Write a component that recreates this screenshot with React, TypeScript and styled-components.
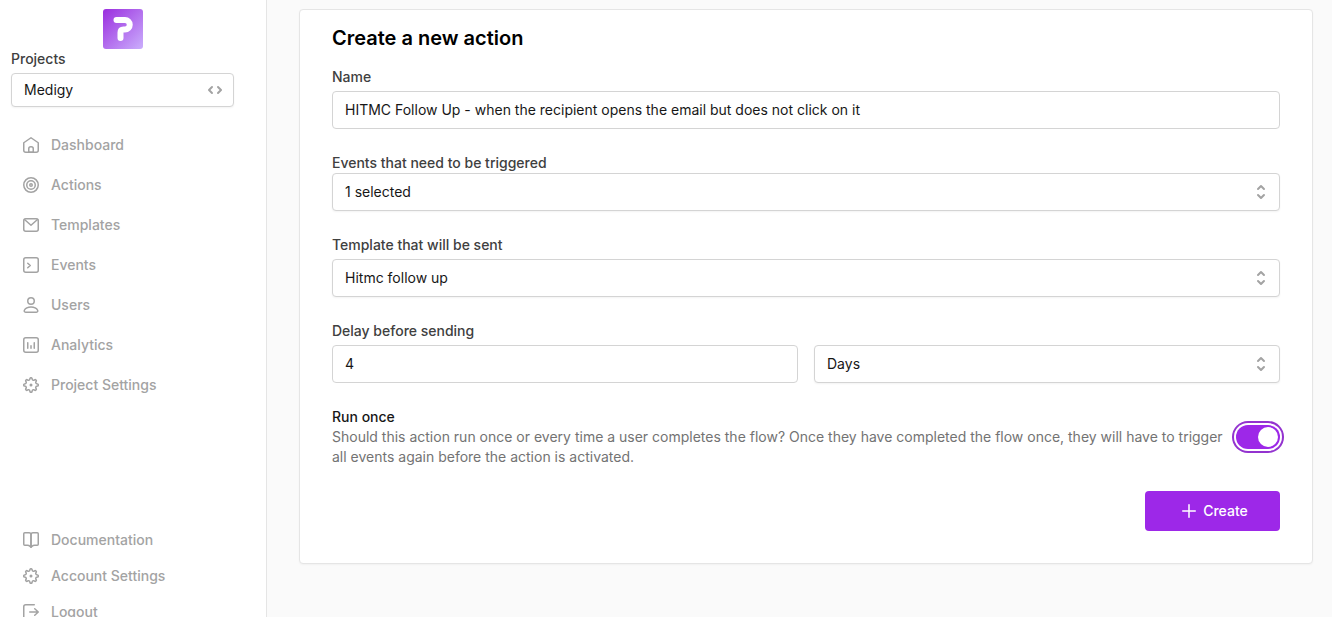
import React, { useState } from 'react';
import styled, { createGlobalStyle } from 'styled-components';

const GlobalStyle = createGlobalStyle`
  *, *::before, *::after { box-sizing: border-box; }
  body {
    margin: 0;
    background: #fafafa;
    color: #171717;
    font-family: Inter, 'Liberation Sans', sans-serif;
    font-size: 14px;
    line-height: 20px;
  }
  button, input, select { font: inherit; color: inherit; }
`;

const Layout = styled.div`
  display: flex;
  min-height: 100vh;
`;

const Sidebar = styled.aside`
  position: sticky;
  top: 0;
  display: flex;
  flex-direction: column;
  flex: 0 0 267px;
  height: 100vh;
  overflow: hidden;
  padding: 9px 32px 0 11px;
  background: #fff;
  border-right: 1px solid #e5e5e5;
`;

const LogoLink = styled.a`
  align-self: center;
  flex: none;
  display: block;
  width: 40px;
  height: 40px;
`;

const ProjectLabel = styled.label`
  color: #404040;
  font-weight: 500;
`;

const SelectBox = styled.div<{ $spaced?: boolean }>`
  position: relative;
  margin-top: ${(p) => (p.$spaced ? 4 : 0)}px;
  color: #a3a3a3;
`;

const Control = styled.input`
  display: block;
  width: 100%;
  height: 38px;
  padding: 0 12px;
  border: 1px solid #d4d4d4;
  border-radius: 4px;
  background: #fff;
  color: #171717;
`;

const Dropdown = styled(Control).attrs({ as: 'select' })<{ $compact?: boolean }>`
  appearance: none;
  height: ${(p) => (p.$compact ? 34 : 38)}px;
  box-shadow: 0 1px 2px rgba(0, 0, 0, 0.05);
`;

const SelectIcon = styled.svg<{ $sideways?: boolean }>`
  position: absolute;
  right: 9px;
  top: 50%;
  width: 20px;
  height: 20px;
  transform: translateY(-50%) ${(p) => (p.$sideways ? 'rotate(90deg)' : '')};
  pointer-events: none;
`;

const NavList = styled.nav<{ $dense?: boolean }>`
  display: flex;
  flex: none;
  flex-direction: column;
  gap: ${(p) => (p.$dense ? 0 : 4)}px;
  margin-top: ${(p) => (p.$dense ? 119 : 20)}px;
`;

const NavLink = styled.a`
  display: flex;
  align-items: center;
  gap: 8px;
  height: 36px;
  padding: 0 8px;
  color: #a3a3a3;
  font-weight: 500;
  text-decoration: none;
  svg { flex: none; }
`;

const Main = styled.main`
  flex: 1;
  min-width: 0;
  padding: 9px 19px 32px 32px;
`;

const Card = styled.form`
  padding: 14px 32px 32px;
  background: #fff;
  border: 1px solid #e5e5e5;
  border-radius: 4px;
  box-shadow: 0 1px 2px rgba(0, 0, 0, 0.04);
`;

const Title = styled.h1`
  margin: 0 0 15px;
  color: #000;
  font-size: 20px;
  font-weight: 600;
  line-height: 28px;
`;

const Fields = styled.div`
  display: flex;
  flex-direction: column;
  gap: 24px;
`;

const FieldLabel = styled.label`
  display: block;
  color: #404040;
  font-weight: 500;
`;

const TextInput = styled(Control)`
  margin-top: 4px;
  padding-bottom: 2px;
`;

const Split = styled.div`
  display: grid;
  grid-template-columns: 1fr 1fr;
  gap: 16px;
`;

const RunOnce = styled.div`
  display: flex;
  align-items: center;
  gap: 8px;
`;

const RunText = styled.div`
  flex: 1;
`;

const RunLabel = styled.label`
  display: block;
  color: #171717;
  font-weight: 500;
`;

const Hint = styled.p`
  margin: 0;
  color: #737373;
`;

const Switch = styled.input`
  appearance: none;
  display: flex;
  flex: none;
  width: 44px;
  height: 24px;
  margin: 0;
  padding: 2px;
  border-radius: 12px;
  background: ${(p) => (p.checked ? '#9d28e8' : '#e5e5e5')};
  box-shadow: 0 0 0 2px #fff, 0 0 0 4px #9333cf;
  justify-content: ${(p) => (p.checked ? 'flex-end' : 'flex-start')};
  cursor: pointer;
  &::before {
    content: '';
    width: 20px;
    height: 20px;
    border-radius: 50%;
    background: #fff;
  }
`;

const Actions = styled.div`
  display: flex;
  justify-content: flex-end;
`;

const CreateButton = styled.button`
  display: flex;
  align-items: center;
  justify-content: center;
  gap: 2px;
  min-width: 135px;
  height: 40px;
  padding: 0 32px;
  border: 0;
  border-radius: 4px;
  background: #9d28e8;
  color: #fff;
  font-weight: 500;
`;

const gearQuarter =
  'M12 4.75H11.8715C11.3721 4.75 10.9492 5.11856 10.8809 5.61336L10.7938 6.24511C10.7382 6.64815 10.4403 6.96897 10.0622 7.11922C10.006 7.14156 9.95021 7.16484 9.89497 7.18905C9.52217 7.3524 9.08438 7.3384 8.75876 7.09419L8.45119 6.86351C8.05307 6.56492 7.49597 6.60451 7.14408 6.9564L6.95641 7.14408C6.60452 7.49597 6.56492 8.05306 6.86351 8.45118L7.09419 8.75876C7.33841 9.08437 7.3524 9.52216 7.18905 9.89497C7.16484 9.95021 7.14156 10.006 7.11922 10.0622C6.96897 10.4403 6.64815 10.7382 6.24511 10.7938L5.61336 10.8809C5.11856 10.9492 4.75 11.372 4.75 11.8715V12';

const icons: Record<string, React.ReactNode> = {
  home: (
    <>
      <path d="M6.75 19.25H17.25C18.35 19.25 19.25 18.35 19.25 17.25V9.75L12 4.75L4.75 9.75V17.25C4.75 18.35 5.65 19.25 6.75 19.25Z" />
      <path d="M9.75 15.75C9.75 14.65 10.65 13.75 11.75 13.75H12.25C13.35 13.75 14.25 14.65 14.25 15.75V19.25H9.75V15.75Z" />
    </>
  ),
  target: (
    <>
      <circle cx="12" cy="12" r="7.25" />
      <circle cx="12" cy="12" r="4.25" />
      <circle cx="12" cy="12" r="1.25" />
    </>
  ),
  mail: (
    <>
      <rect x="4.75" y="5.75" width="14.5" height="12.5" rx="2" />
      <path d="M5.5 6.5L12 12.25L18.5 6.5" />
    </>
  ),
  terminal: (
    <>
      <rect x="4.75" y="4.75" width="14.5" height="14.5" rx="2" />
      <path d="M8.75 10.25L11.25 12.5L8.75 14.75" />
    </>
  ),
  user: (
    <>
      <circle cx="12" cy="8" r="3.25" />
      <path d="M6.85 19.25H17.15C18.29 19.25 19.17 18.27 18.64 17.26C17.86 15.77 16.07 14 12 14C7.93 14 6.14 15.77 5.36 17.26C4.83 18.27 5.71 19.25 6.85 19.25Z" />
    </>
  ),
  chart: (
    <>
      <rect x="4.75" y="4.75" width="14.5" height="14.5" rx="2" />
      <path d="M8.75 15.25V9.75M15.25 15.25V9.75M12 15.25V12.75" />
    </>
  ),
  gear: (
    <>
      {[0, 90, 180, 270].map((angle) => (
        <path key={angle} d={gearQuarter} transform={`rotate(${angle} 12 12)`} />
      ))}
      <circle cx="12" cy="12" r="0.75" />
    </>
  ),
  book: (
    <>
      <path d="M19.25 5.75C19.25 5.2 18.8 4.75 18.25 4.75H14C12.9 4.75 12 5.65 12 6.75V19.25L12.83 18.42C13.58 17.67 14.6 17.25 15.66 17.25H18.25C18.8 17.25 19.25 16.8 19.25 16.25V5.75Z" />
      <path d="M4.75 5.75C4.75 5.2 5.2 4.75 5.75 4.75H10C11.1 4.75 12 5.65 12 6.75V19.25L11.17 18.42C10.42 17.67 9.4 17.25 8.34 17.25H5.75C5.2 17.25 4.75 16.8 4.75 16.25V5.75Z" />
    </>
  ),
  logout: (
    <path d="M15.75 8.75L19.25 12L15.75 15.25M19 12H10.75M15.25 4.75H6.75C5.65 4.75 4.75 5.65 4.75 6.75V17.25C4.75 18.35 5.65 19.25 6.75 19.25H15.25" />
  ),
  plus: <path d="M12 5.75V18.25M18.25 12H5.75" />,
};

const Icon = ({ name }: { name: string }) => (
  <svg width="24" height="24" viewBox="0 0 24 24" fill="none" stroke="currentColor" strokeWidth="1.5" strokeLinecap="round" strokeLinejoin="round" aria-hidden="true">
    {icons[name]}
  </svg>
);

const UpDown = ({ sideways }: { sideways?: boolean }) => (
  <SelectIcon $sideways={sideways} viewBox="0 0 20 20" fill="currentColor" aria-hidden="true">
    <path
      fillRule="evenodd"
      d="M10 3a1 1 0 01.707.293l3 3a1 1 0 01-1.414 1.414L10 5.414 7.707 7.707a1 1 0 01-1.414-1.414l3-3A1 1 0 0110 3zm-3.707 9.293a1 1 0 011.414 0L10 14.586l2.293-2.293a1 1 0 011.414 1.414l-3 3a1 1 0 01-1.414 0l-3-3a1 1 0 010-1.414z"
    />
  </SelectIcon>
);

const Logo = () => (
  <svg width="40" height="40" viewBox="0 0 40 40" fill="none" aria-hidden="true">
    <defs>
      <linearGradient id="logo-fill" x1="2" y1="2" x2="38" y2="38" gradientUnits="userSpaceOnUse">
        <stop stopColor="#9d34e0" />
        <stop offset="1" stopColor="#c8a8fb" />
      </linearGradient>
    </defs>
    <rect width="40" height="40" rx="3" fill="url(#logo-fill)" />
    <path d="M13.5 11H22A4.75 4.75 0 0 1 22 20.5H20.5Q17.5 20.5 17.5 23.5V29" stroke="#fff" strokeWidth="6" strokeLinecap="round" strokeLinejoin="round" />
  </svg>
);

const mainLinks = [
  ['home', 'Dashboard'],
  ['target', 'Actions'],
  ['mail', 'Templates'],
  ['terminal', 'Events'],
  ['user', 'Users'],
  ['chart', 'Analytics'],
  ['gear', 'Project Settings'],
];

const accountLinks = [
  ['book', 'Documentation'],
  ['gear', 'Account Settings'],
  ['logout', 'Logout'],
];

const Links = ({ items }: { items: string[][] }) => (
  <>
    {items.map(([icon, text]) => (
      <NavLink href="#" key={text}>
        <Icon name={icon} />
        {text}
      </NavLink>
    ))}
  </>
);

export default function App() {
  const [runOnce, setRunOnce] = useState(true);
  return (
    <>
      <GlobalStyle />
      <Layout>
        <Sidebar>
          <LogoLink href="#" aria-label="Home">
            <Logo />
          </LogoLink>
          <ProjectLabel htmlFor="project">Projects</ProjectLabel>
          <SelectBox $spaced>
            <Dropdown id="project" $compact>
              <option>Medigy</option>
            </Dropdown>
            <UpDown sideways />
          </SelectBox>
          <NavList aria-label="Main">
            <Links items={mainLinks} />
          </NavList>
          <NavList $dense aria-label="Account">
            <Links items={accountLinks} />
          </NavList>
        </Sidebar>
        <Main>
          <Card onSubmit={(e) => e.preventDefault()}>
            <Title>Create a new action</Title>
            <Fields>
              <div>
                <FieldLabel htmlFor="name">Name</FieldLabel>
                <TextInput id="name" type="text" defaultValue="HITMC Follow Up - when the recipient opens the email but does not click on it" />
              </div>
              <div>
                <FieldLabel htmlFor="events">Events that need to be triggered</FieldLabel>
                <SelectBox>
                  <Dropdown id="events">
                    <option>1 selected</option>
                  </Dropdown>
                  <UpDown />
                </SelectBox>
              </div>
              <div>
                <FieldLabel htmlFor="template">Template that will be sent</FieldLabel>
                <SelectBox $spaced>
                  <Dropdown id="template">
                    <option>Hitmc follow up</option>
                  </Dropdown>
                  <UpDown />
                </SelectBox>
              </div>
              <div>
                <FieldLabel htmlFor="delay">Delay before sending</FieldLabel>
                <Split>
                  <TextInput id="delay" type="text" inputMode="numeric" defaultValue="4" />
                  <SelectBox $spaced>
                    <Dropdown id="unit" aria-label="Delay unit">
                      <option>Days</option>
                    </Dropdown>
                    <UpDown />
                  </SelectBox>
                </Split>
              </div>
              <RunOnce>
                <RunText>
                  <RunLabel htmlFor="run-once">Run once</RunLabel>
                  <Hint id="run-once-hint">
                    Should this action run once or every time a user completes the flow? Once they have completed the flow once, they will have to trigger all events again before the action is activated.
                  </Hint>
                </RunText>
                <Switch id="run-once" type="checkbox" role="switch" aria-describedby="run-once-hint" checked={runOnce} onChange={(e) => setRunOnce(e.target.checked)} />
              </RunOnce>
              <Actions>
                <CreateButton type="submit">
                  <Icon name="plus" />
                  Create
                </CreateButton>
              </Actions>
            </Fields>
          </Card>
        </Main>
      </Layout>
    </>
  );
}
